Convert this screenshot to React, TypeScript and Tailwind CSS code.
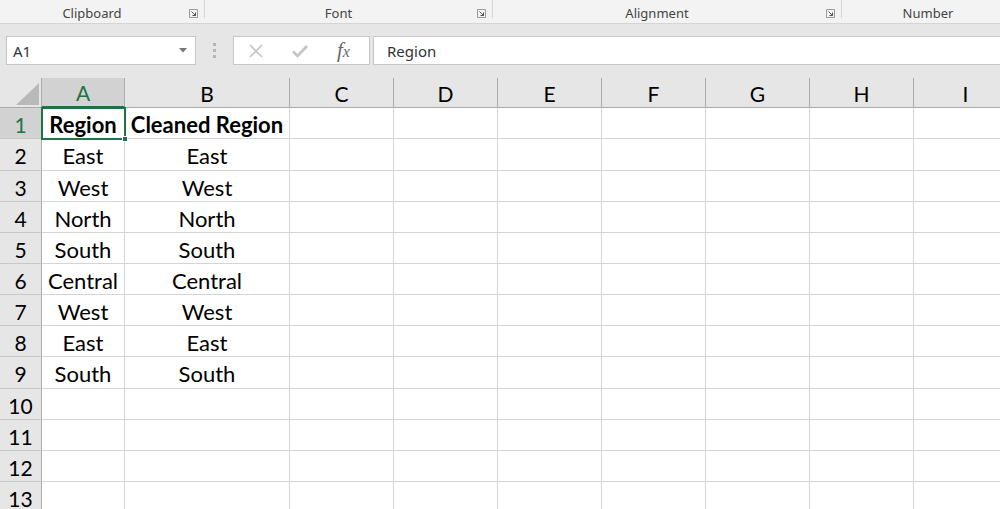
import React from "react";

const cols = ["A", "B", "C", "D", "E", "F", "G", "H", "I"];

const data: [string, string][] = [
  ["Region", "Cleaned Region"],
  ["East", "East"],
  ["West", "West"],
  ["North", "North"],
  ["South", "South"],
  ["Central", "Central"],
  ["West", "West"],
  ["East", "East"],
  ["South", "South"],
];

const rowHeights = ["h-[31px]", "h-[32px]", "h-[31px]", "h-[31px]", "h-[31px]", "h-[31px]", "h-[31px]", "h-[31px]", "h-[32px]", "h-[31px]", "h-[31px]", "h-[31px]", "h-[31px]"];

const gridCols = "grid grid-cols-[42px_83px_165px_104px_104px_104px_104px_104px_104px_104px] grid-rows-[100%]";

function Launcher() {
  return (
    <svg width="9" height="9" viewBox="0 0 9 9" className="shrink-0">
      <path d="M0.5 0.5H8.5V8.5H0.5Z" fill="none" stroke="#999" strokeWidth="1" />
      <path d="M2.5 2.5L6.5 6.5M6.5 3.5V6.5H3.5" fill="none" stroke="#555" strokeWidth="1" />
    </svg>
  );
}

function Group({ label, w }: { label: string; w: string }) {
  return (
    <div className={`${w} h-[18px] relative border-r border-[#d6d6d6]`}>
      <div className="absolute left-0 right-[20px] top-[5px] text-center text-[13px] leading-[16px] text-[#444]">{label}</div>
      <div className="absolute right-[6px] top-[9px]">
        <Launcher />
      </div>
    </div>
  );
}

export default function App() {
  return (
    <div className="w-[1000px] h-[509px] overflow-hidden bg-[#e6e6e6] font-['Noto_Sans',sans-serif]">
      {/* ribbon group labels */}
      <div className="h-[24px] bg-[#f3f3f3] border-b border-[#d5d5d5] flex items-start">
        <Group label="Clipboard" w="w-[205px]" />
        <Group label="Font" w="w-[288px]" />
        <Group label="Alignment" w="w-[349px]" />
        <div className="flex-1 text-center text-[13px] leading-[16px] text-[#444] pt-[5px] pl-[14px]">Number</div>
      </div>

      {/* formula bar */}
      <div className="h-[54px] pt-[12px] pb-[13px] flex items-stretch">
        <div className="ml-[6px] w-[190px] bg-white border border-[#c6c6c6] flex items-center justify-between pl-[6px] pr-[8px]">
          <span className="text-[15px] text-[#333] pt-[2px]">A1</span>
          <svg width="8" height="5" viewBox="0 0 8 5">
            <path d="M0 0H8L4 4.5Z" fill="#777" />
          </svg>
        </div>
        <div className="w-[37px] flex flex-col items-center justify-center gap-[3px]">
          <div className="w-[3px] h-[3px] bg-[#b5b5b5]" />
          <div className="w-[3px] h-[3px] bg-[#b5b5b5]" />
          <div className="w-[3px] h-[3px] bg-[#b5b5b5]" />
        </div>
        <div className="w-[137px] bg-white border border-[#c6c6c6] flex items-center">
          <svg width="16" height="16" viewBox="0 0 16 16" className="ml-[14px]">
            <path d="M2 2L14 14M14 2L2 14" stroke="#c4c4c4" strokeWidth="1.6" />
          </svg>
          <svg width="18" height="16" viewBox="0 0 18 16" className="ml-[27px]">
            <path d="M2 8.5L6.5 13L16 3" fill="none" stroke="#c4c4c4" strokeWidth="2.6" />
          </svg>
          <span className="ml-[28px] text-[21px] italic text-[#6a6a6a] font-['Liberation_Serif',serif] leading-none">
            f<span className="text-[16px]">x</span>
          </span>
        </div>
        <div className="ml-[3px] flex-1 bg-white border border-[#c6c6c6] border-r-0 flex items-center pl-[13px]">
          <span className="text-[15px] text-[#333] pt-[2px]">Region</span>
        </div>
      </div>

      {/* sheet */}
      <div className="relative font-['Lato',sans-serif]">
        {/* column headers */}
        <div className={`${gridCols} h-[30px] border-b border-[#ababab]`}>
          <div className="relative border-r border-[#ababab] bg-[#e6e6e6]">
            <svg width="42" height="29" viewBox="0 0 42 29" className="absolute inset-0">
              <path d="M16 27H39V5Z" fill="#b9b9b9" />
            </svg>
          </div>
          {cols.map((c, i) => (
            <div
              key={c}
              className={`flex items-center justify-center text-[21px] leading-[24px] pt-[2px] border-r border-[#ababab] ${
                i === 0 ? "bg-[#d2d2d2] text-[#217346] border-b-2 border-b-[#217346] mb-[-1px]" : "bg-[#e6e6e6] text-black"
              }`}
            >
              {c}
            </div>
          ))}
        </div>

        {/* rows */}
        {rowHeights.map((h, r) => {
          const row = data[r];
          return (
            <div key={r} className={`${gridCols} ${h}`}>
              <div
                className={`flex items-center justify-center text-[21px] leading-[24px] pt-[3px] border-r border-[#ababab] border-b border-b-[#c8c8c8] ${
                  r === 0 ? "bg-[#d2d2d2] text-[#217346]" : "bg-[#e6e6e6] text-black"
                }`}
              >
                {r + 1}
              </div>
              {cols.map((c, i) => (
                <div
                  key={c}
                  className={`bg-white border-r border-b border-[#d4d4d4] flex items-center justify-center text-[22px] leading-[24px] pt-[3px] text-black whitespace-nowrap overflow-hidden ${
                    r === 0 ? "font-bold" : ""
                  }`}
                >
                  {row && i < 2 ? row[i] : ""}
                </div>
              ))}
            </div>
          );
        })}

        {/* active cell A1 */}
        <div className="absolute left-[41px] top-[29px] w-[85px] h-[33px] border-2 border-[#217346] pointer-events-none" />
        <div className="absolute left-[122px] top-[58px] w-[6px] h-[6px] bg-[#217346] border border-white" />
      </div>
    </div>
  );
}
